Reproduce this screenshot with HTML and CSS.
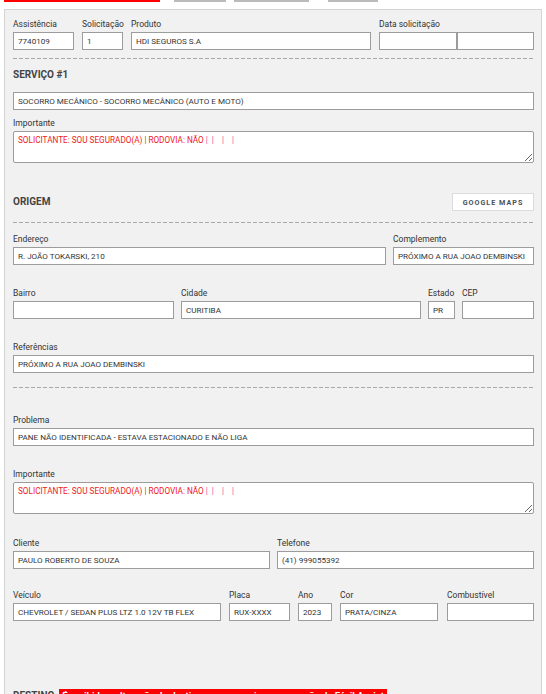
FILE: index.html
```html
<!DOCTYPE html>
<html lang="pt-BR">
<head>
  <meta charset="UTF-8">
  <meta name="viewport" content="width=device-width, initial-scale=1.0">
  <title>Atendimento</title>
  <link rel="stylesheet" href="styles.css">
</head>
<body>
  <!-- Tabs (scrolled, only the bottom border shows) -->
  <div class="tabs">
    <span class="tab active"></span>
    <span class="tab tab-2"></span>
    <span class="tab tab-3"></span>
    <span class="tab tab-4"></span>
  </div>

  <div class="panel">
    <!-- Header fields -->
    <div class="row row-first">
      <div class="field w-assist"><label>Assistência</label><div class="input">7740109</div></div>
      <div class="field w-solic"><label>Solicitação</label><div class="input">1</div></div>
      <div class="field w-produto"><label>Produto</label><div class="input">HDI SEGUROS S.A</div></div>
      <div class="field grow">
        <label>Data solicitação</label>
        <div class="pair">
          <div class="input"></div>
          <div class="input"></div>
        </div>
      </div>
    </div>

    <div class="divider div-1"></div>

    <!-- Serviço -->
    <h3 class="section-title title-servico">SERVIÇO #1</h3>
    <div class="input service">SOCORRO MECÂNICO - SOCORRO MECÂNICO (AUTO E MOTO)</div>

    <div class="field note-1">
      <label>Importante</label>
      <div class="textarea">SOLICITANTE: SOU SEGURADO(A) | RODOVIA: NÃO <span class="sep">|</span>&nbsp;&nbsp;<span class="sep">|</span>&nbsp;&nbsp;&nbsp;&nbsp;<span class="sep">|</span>&nbsp;&nbsp;&nbsp;&nbsp;<span class="sep">|</span></div>
    </div>

    <!-- Origem -->
    <div class="section-head">
      <h3 class="section-title">ORIGEM</h3>
      <button class="btn-maps">Google Maps</button>
    </div>

    <div class="divider div-2"></div>

    <div class="row row-endereco">
      <div class="field grow"><label>Endereço</label><div class="input">R. JOÃO TOKARSKI, 210</div></div>
      <div class="field w-compl"><label>Complemento</label><div class="input">PRÓXIMO A RUA JOAO DEMBINSKI</div></div>
    </div>

    <div class="row">
      <div class="field w-bairro"><label>Bairro</label><div class="input"></div></div>
      <div class="field grow"><label>Cidade</label><div class="input">CURITIBA</div></div>
      <div class="field w-estado"><label>Estado</label><div class="input">PR</div></div>
      <div class="field w-cep"><label>CEP</label><div class="input"></div></div>
    </div>

    <div class="row">
      <div class="field grow"><label>Referências</label><div class="input">PRÓXIMO A RUA JOAO DEMBINSKI</div></div>
    </div>

    <div class="divider div-3"></div>

    <!-- Problema -->
    <div class="row row-problema">
      <div class="field grow"><label>Problema</label><div class="input">PANE NÃO IDENTIFICADA - ESTAVA ESTACIONADO E NÃO LIGA</div></div>
    </div>

    <div class="row">
      <div class="field grow">
        <label>Importante</label>
        <div class="textarea">SOLICITANTE: SOU SEGURADO(A) | RODOVIA: NÃO <span class="sep">|</span>&nbsp;&nbsp;<span class="sep">|</span>&nbsp;&nbsp;&nbsp;&nbsp;<span class="sep">|</span>&nbsp;&nbsp;&nbsp;&nbsp;<span class="sep">|</span></div>
      </div>
    </div>

    <!-- Cliente / veículo -->
    <div class="row row-cliente">
      <div class="field half"><label>Cliente</label><div class="input">PAULO ROBERTO DE SOUZA</div></div>
      <div class="field half"><label>Telefone</label><div class="input">(41) 999055392</div></div>
    </div>

    <div class="row row-veiculo">
      <div class="field w-veiculo"><label>Veículo</label><div class="input">CHEVROLET / SEDAN PLUS LTZ 1.0 12V TB FLEX</div></div>
      <div class="field w-placa"><label>Placa</label><div class="input">RUX-XXXX</div></div>
      <div class="field w-ano"><label>Ano</label><div class="input">2023</div></div>
      <div class="field w-cor"><label>Cor</label><div class="input">PRATA/CINZA</div></div>
      <div class="field grow"><label>Combustível</label><div class="input"></div></div>
    </div>

    <!-- Destino -->
    <div class="destino">
      <h3 class="section-title">DESTINO</h3>
      <span class="alert">É proibido a alteração do destino sem comunicar a operação da Fácil Assist</span>
    </div>
  </div>
</body>
</html>
```

FILE: styles.css
```css
/* Base */
* {
  box-sizing: border-box;
}

body {
  margin: 0;
  background: #fff;
  color: #333;
  font-family: Roboto, "Liberation Sans", Arial, sans-serif;
}

/* Tabs strip */
.tabs {
  display: flex;
  height: 2px;
  margin: 0 4px 7px;
}

.tab {
  height: 2px;
  background: #bbb;
}

.tab.active {
  width: 156px;
  margin-right: 14px;
  background: #f00;
}

.tab-2 { width: 52px; margin-right: 8px; }
.tab-3 { width: 75px; margin-right: 19px; }
.tab-4 { width: 50px; }

/* Panel */
.panel {
  margin: 0 4px;
  padding: 8px 7px 0 8px;
  min-height: 700px;
  background: #f1f1f1;
  border: 1px solid #d4d4d4;
}

/* Rows and fields */
.row {
  display: flex;
  gap: 7px;
  margin-top: 22px;
}

.row-first { margin-top: 0; gap: 8px; }
.row-endereco { margin-top: 10px; }
.row-problema { margin-top: 26px; }
.row-cliente { margin-top: 23px; }
.row-veiculo { margin-top: 20px; gap: 8px; }

.field {
  display: flex;
  flex-direction: column;
  min-width: 0;
}

.field label {
  display: block;
  height: 14px;
  line-height: 13px;
  font-size: 8.5px;
  color: #333;
  white-space: nowrap;
}

.grow { flex: 1; }
.half { flex: 1; }

.w-assist { width: 61px; }
.w-solic { width: 41px; }
.w-produto { width: 240px; }
.w-compl { width: 141px; }
.w-bairro { width: 161px; }
.w-estado { width: 27px; }
.w-cep { width: 72px; }
.w-veiculo { width: 208px; }
.w-placa { width: 61px; }
.w-ano { width: 34px; }
.w-cor { width: 98px; margin-right: 1px; }

.pair {
  display: flex;
}

.pair .input {
  width: 78px;
}

.pair .input + .input {
  width: 77px;
}

.input {
  height: 18px;
  padding: 0 4px;
  background: #fff;
  border: 1px solid #9c9c9c;
  font-size: 8.1px;
  line-height: 16px;
  color: #333;
  white-space: nowrap;
  overflow: hidden;
}

.service {
  margin-top: 10px;
}

.textarea {
  height: 32px;
  padding: 3px 4px;
  background: #fff;
  border: 1px solid #9c9c9c;
  border-radius: 2px;
  font-size: 8.2px;
  line-height: 11px;
  color: #f01818;
  white-space: nowrap;
  overflow: auto;
  resize: vertical;
}

.textarea .sep {
  color: #f24aa0;
}

.note-1 {
  margin-top: 7px;
}

/* Dividers */
.divider {
  height: 1px;
  background: repeating-linear-gradient(90deg, #a8a8a8 0 4px, transparent 4px 6px);
}

.div-1 { margin-top: 8px; }
.div-2 { margin-top: 11px; }
.div-3 { margin-top: 14px; }

/* Section titles */
.section-title {
  margin: 0;
  font-size: 10px;
  line-height: 14px;
  font-weight: bold;
  color: #444;
}

.title-servico {
  margin-top: 9px;
}

.section-head {
  display: flex;
  justify-content: space-between;
  align-items: center;
  margin-top: 30px;
  height: 18px;
}

.btn-maps {
  width: 82px;
  height: 18px;
  padding: 0;
  background: #fff;
  border: 1px solid #dcdcdc;
  font-family: Roboto, "Liberation Sans", Arial, sans-serif;
  font-size: 7.2px;
  font-weight: bold;
  letter-spacing: 1px;
  text-transform: uppercase;
  color: #4a5058;
  cursor: pointer;
}

/* Destino */
.destino {
  display: flex;
  align-items: flex-start;
  margin-top: 68px;
}

.alert {
  margin-left: 5px;
  padding: 0 3px;
  background: #f00;
  color: #fff;
  font-size: 9.5px;
  line-height: 14px;
  font-weight: bold;
  white-space: nowrap;
}
```
